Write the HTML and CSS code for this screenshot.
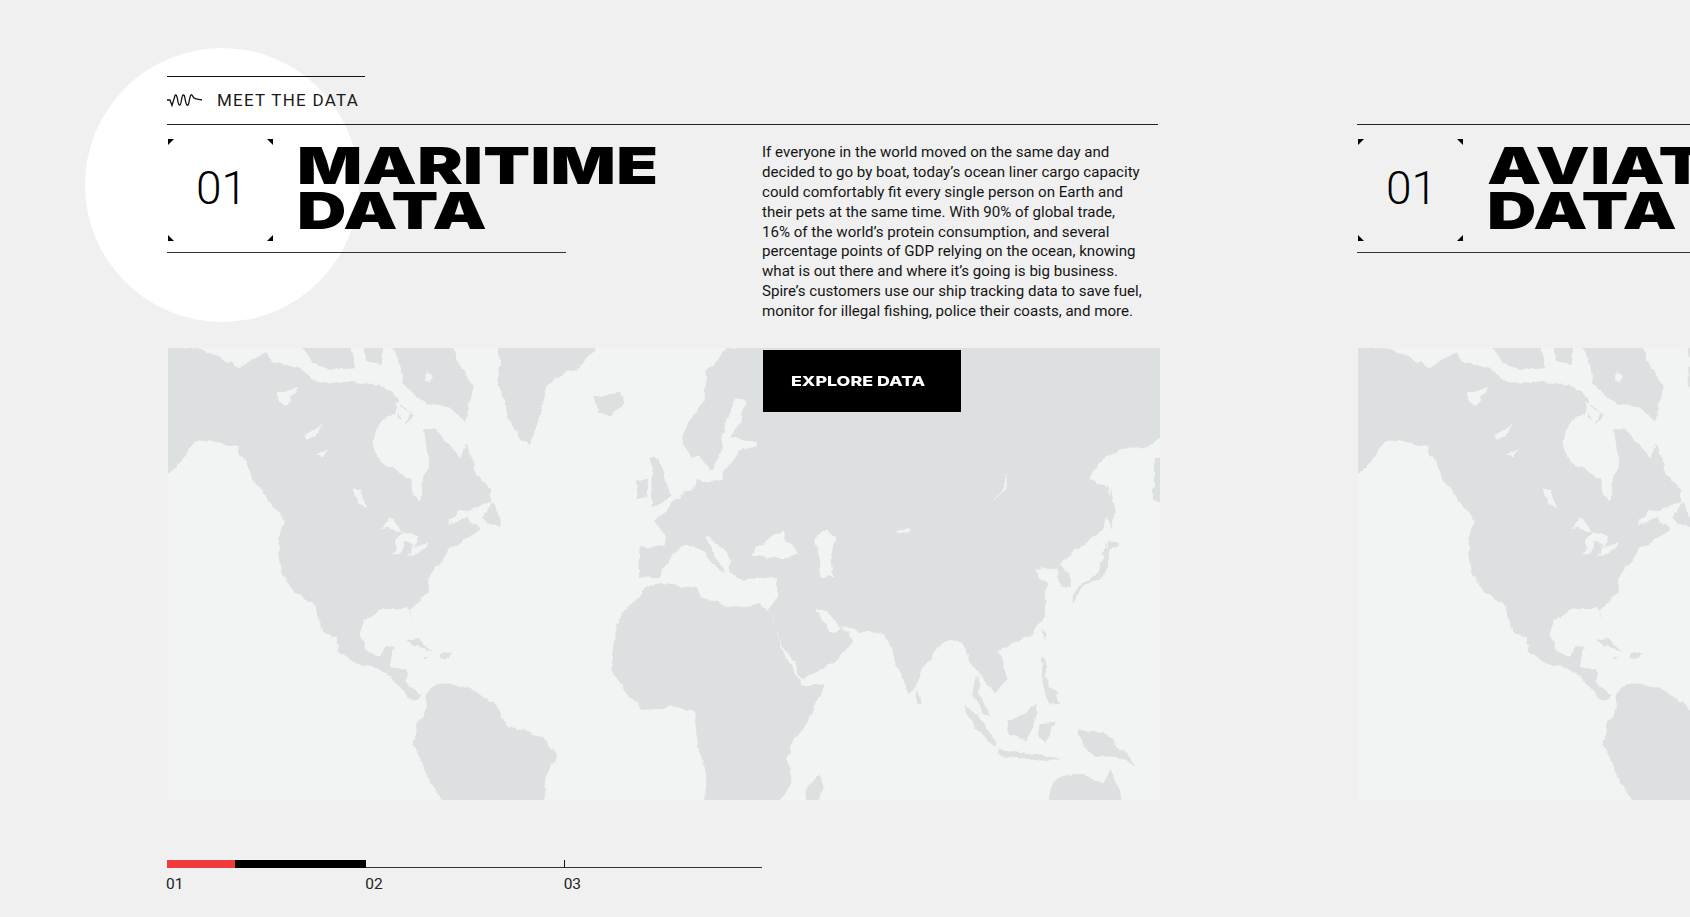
FILE: index.html
```html
<!DOCTYPE html>
<html lang="en">
<head>
<meta charset="utf-8">
<title>Meet the data</title>
<link rel="stylesheet" href="styles.css">
</head>
<body>
<svg class="sprite" aria-hidden="true">
  <defs>
    <filter id="rough" filterUnits="userSpaceOnUse" x="168" y="348" width="992" height="452" color-interpolation-filters="sRGB">
      <feTurbulence type="fractalNoise" baseFrequency="0.09" numOctaves="3" seed="4" result="n"/>
      <feDisplacementMap in="SourceGraphic" in2="n" scale="7" xChannelSelector="R" yChannelSelector="G"/>
      <feGaussianBlur stdDeviation="0.35"/>
    </filter>
  </defs>
  <symbol id="world" viewBox="168 348 992 452">
    <g filter="url(#rough)">
    <rect class="water" x="160" y="340" width="1010" height="470"/>
    <g transform="translate(150 340) scale(.33333)">
      <g class="land">
        <path d="M45,15 L130,28 L200,45 L270,85 L285,70 L350,35 L375,65 L450,85 L480,115 L530,125 L600,125 L650,130 L720,150 L745,175 L740,215 L695,245 L665,300 L680,350 L720,385 L780,415 L790,470 L810,488 L818,420 L835,365 L822,270 L850,262 L900,320 L930,350 L950,310 L975,395 L1025,450 L1020,490 L960,510 L905,535 L890,560 L950,530 L990,570 L930,610 L900,625 L880,655 L850,690 L835,720 L832,760 L790,800 L778,812 L795,860 L800,870 L785,835 L772,805 L720,805 L680,815 L640,840 L635,890 L650,940 L690,950 L705,920 L735,915 L722,985 L770,985 L770,1030 L815,1065 L800,1078 L780,1078 L750,1040 L720,1010 L660,980 L610,965 L565,930 L560,890 L520,880 L480,790 L430,750 L400,700 L385,640 L395,570 L405,545 L380,510 L340,460 L310,420 L290,370 L260,320 L200,305 L170,300 L130,310 L90,370 L45,415 Z"/>
        <path d="M450,15 L520,15 L600,15 L615,85 L540,90 L490,70 Z"/>
        <path d="M645,15 L700,15 L695,75 L645,65 Z"/>
        <path d="M720,15 L910,15 L925,75 L972,140 L960,180 L942,245 L900,200 L830,190 L800,170 L760,130 L750,75 Z"/>
        <path d="M750,190 L790,230 L772,250 L742,230 Z"/>
        <path d="M1000,530 L1025,490 L1050,530 L1055,565 L1010,550 Z"/>
        <path d="M1040,15 L1345,15 L1290,80 L1220,110 L1190,150 L1170,220 L1150,290 L1135,315 L1105,290 L1075,230 L1045,130 L1050,70 Z"/>
        <path d="M1330,175 L1370,165 L1410,150 L1420,190 L1375,230 L1345,215 Z"/>
        <path d="M830,1050 L875,1030 L960,1045 L1040,1095 L1075,1160 L1180,1190 L1222,1240 L1190,1310 L1180,1400 L890,1400 L840,1320 L790,1210 L800,1150 L830,1110 Z"/>
        <path d="M760,900 L800,895 L850,932 L800,918 Z"/>
        <path d="M868,936 L905,940 L890,955 L865,950 Z"/>
        <path d="M820,950 L840,952 L825,958 Z"/>
      </g>
      <g class="water">
        <path d="M380,165 L445,140 L420,185 L400,195 Z"/>
        <path d="M460,290 L520,248 L495,290 L470,298 Z"/>
        <path d="M498,345 L540,325 L520,348 Z"/>
        <path d="M610,445 L630,450 L645,505 L625,495 Z"/>
        <path d="M690,565 L725,532 L760,575 L735,575 L715,560 Z"/>
        <path d="M730,640 L745,590 L770,575 L800,590 L790,620 L835,610 L830,625 L775,650 L790,610 L765,610 L745,640 Z"/>
        <path d="M890,555 L930,510 L965,515 L950,530 L915,530 Z"/>
        <path d="M480,790 L500,810 L525,895 L500,850 Z"/>
        <path d="M500,105 L610,120 L540,130 L490,120 Z"/>
        <path d="M735,180 L780,225 L760,265 L745,215 Z"/>
        <path d="M830,95 L850,105 L840,130 L828,125 Z"/>
      </g>
    </g>
    <g transform="translate(620 340) scale(.35714 .33333)">
      <g class="land">
        <path d="M400,15 L1530,15 L1530,275 L1480,320 L1400,325 L1340,370 L1315,420 L1365,440 L1380,510 L1350,570 L1290,620 L1260,650 L1230,670 L1255,700 L1260,740 L1235,745 L1225,690 L1190,680 L1160,690 L1195,740 L1190,800 L1190,830 L1150,890 L1100,910 L1060,930 L1085,1020 L1050,1060 L1000,990 L980,960 L950,900 L900,910 L850,980 L830,1040 L810,1065 L780,990 L760,920 L730,880 L650,870 L620,850 L650,905 L600,970 L510,1020 L450,900 L415,810 L440,770 L440,715 L370,715 L340,720 L310,695 L300,640 L250,590 L238,590 L270,650 L295,700 L270,680 L210,615 L170,620 L130,670 L105,715 L50,710 L55,620 L125,620 L125,590 L95,540 L130,515 L170,465 L215,435 L225,350 L200,350 L175,310 L180,265 L240,170 L240,100 L285,40 L330,15 Z"/>
        <path d="M-20,930 L0,830 L75,740 L130,730 L215,745 L225,770 L300,800 L390,795 L415,810 L470,960 L510,1040 L575,1030 L540,1120 L480,1220 L470,1250 L480,1330 L440,1400 L235,1400 L240,1300 L210,1180 L215,1120 L170,1100 L60,1110 L0,1030 L-20,980 Z"/>
        <path d="M90,350 L110,360 L130,440 L145,470 L90,500 L85,440 Z"/>
        <path d="M50,420 L75,420 L75,465 L45,480 Z"/>
        <path d="M560,1300 L570,1340 L555,1400 L515,1400 L520,1350 Z"/>
        <path d="M830,1050 L845,1090 L825,1090 Z"/>
        <path d="M1360,610 L1370,640 L1355,710 L1300,740 L1265,790 L1265,760 L1340,700 Z"/>
        <path d="M1370,600 L1395,610 L1365,635 Z"/>
        <path d="M1375,440 L1385,520 L1370,570 L1370,490 Z"/>
        <path d="M1185,870 L1192,880 L1182,905 Z"/>
        <path d="M1495,360 L1530,355 L1530,490 L1495,480 Z"/>
        <path d="M1185,950 L1197,980 L1190,1010 L1220,1060 L1232,1090 L1200,1090 L1180,1020 Z"/>
        <path d="M960,1100 L1000,1120 L1055,1210 L1050,1225 L1000,1170 Z"/>
        <path d="M1055,1230 L1240,1255 L1180,1262 L1060,1245 Z"/>
        <path d="M1165,1090 L1165,1130 L1140,1200 L1090,1190 L1085,1140 L1130,1125 Z"/>
        <path d="M1175,1150 L1220,1145 L1195,1210 L1170,1190 Z"/>
        <path d="M1280,1170 L1360,1180 L1410,1235 L1445,1280 L1390,1250 L1330,1250 L1290,1200 Z"/>
        <path d="M1195,1400 L1210,1330 L1270,1295 L1290,1300 L1350,1330 L1375,1285 L1410,1400 Z"/>
        <path d="M1000,1000 L1005,1060 L1040,1130 L1015,1120 L990,1060 Z"/>
      </g>
      <g class="water">
        <path d="M325,175 L350,180 L340,240 L310,290 L385,305 L385,320 L330,335 L300,380 L285,420 L235,430 L215,410 L220,345 L255,395 L285,330 L290,260 Z"/>
        <path d="M380,625 L430,590 L465,565 L460,590 L495,640 L470,655 L400,650 L370,650 Z"/>
        <path d="M545,590 L580,565 L600,600 L590,650 L600,710 L565,715 L555,650 Z"/>
        <path d="M775,572 L812,568 L815,575 L780,580 Z"/>
        <path d="M1085,400 L1085,440 L1040,485 L1075,440 Z"/>
        <path d="M550,810 L570,810 L620,860 L600,880 L580,870 Z"/>
      </g>
    </g>
    </g>
  </symbol>
</svg>

<div class="circle"></div>

<main class="track">
  <section class="slide">
    <div class="eyebrow">
      <svg class="wave" viewBox="0 0 36 14" aria-hidden="true"><path d="M0 7 H3 L5 12.5 L8 2.5 C9 1 10 3 10.5 6 C11 10 12 13 13 12 C14.5 11 14.5 3 16 2 C17.5 1 18 6 18.5 8 C19 11 20 13 21 12 C22.5 10 22.5 3 24 2 C25 1 26 4 27 5 C28 6 30 6 35 7"/></svg>
      <span>MEET THE DATA</span>
    </div>
    <div class="head">
      <div class="title-block">
        <div class="index">
          <i class="corner tl"></i><i class="corner tr"></i><i class="corner bl"></i><i class="corner br"></i>
          01
        </div>
        <h2 class="title">MARITIME<br>DATA</h2>
      </div>
      <div class="copy">
        <p>If everyone in the world moved on the same day and<br>decided to go by boat, today’s ocean liner cargo capacity<br>could comfortably fit every single person on Earth and<br>their pets at the same time. With 90% of global trade,<br>16% of the world’s protein consumption, and several<br>percentage points of GDP relying on the ocean, knowing<br>what is out there and where it’s going is big business.<br>Spire’s customers use our ship tracking data to save fuel,<br>monitor for illegal fishing, police their coasts, and more.</p>
        <a class="cta" href="#"><span>EXPLORE DATA</span></a>
      </div>
    </div>
    <svg class="map"><use href="#world"/></svg>
  </section>

  <section class="slide">
    <div class="eyebrow eyebrow-empty"></div>
    <div class="head">
      <div class="title-block">
        <div class="index">
          <i class="corner tl"></i><i class="corner tr"></i><i class="corner bl"></i><i class="corner br"></i>
          01
        </div>
        <h2 class="title">AVIATION<br>DATA</h2>
      </div>
    </div>
    <svg class="map"><use href="#world"/></svg>
  </section>
</main>

<nav class="progress">
  <div class="bar">
    <div class="seg seg-red"></div>
    <div class="seg seg-black"></div>
    <div class="tick"></div>
  </div>
  <div class="labels">
    <span>01</span><span>02</span><span>03</span>
  </div>
</nav>
</body>
</html>
```

FILE: styles.css
```css
* { box-sizing: border-box; }

html, body { margin: 0; height: 100%; }

body {
  position: relative;
  width: 1690px;
  height: 917px;
  overflow: hidden;
  background: #f0f0f0;
  color: #000;
  font-family: Roboto, "Liberation Sans", sans-serif;
}

.sprite { position: absolute; width: 0; height: 0; }

.circle {
  position: absolute;
  left: 85px;
  top: 48px;
  width: 274px;
  height: 274px;
  border-radius: 50%;
  background: #fff;
}

.track {
  position: relative;
  display: flex;
  gap: 197px;
  padding: 76px 0 0 167px;
  width: 1690px;
  height: 860px;
  overflow: hidden;
}

.slide {
  flex: 0 0 992px;
  display: flex;
  flex-direction: column;
}

.eyebrow {
  display: flex;
  align-items: center;
  width: 198px;
  height: 48px;
  padding-bottom: 1px;
  border-top: 1px solid #111;
  font-size: 17px;
  letter-spacing: 1.25px;
  white-space: nowrap;
  color: #1a1a1a;
}

.eyebrow-empty { border-top: 0; }

.wave {
  flex: none;
  width: 36px;
  height: 14px;
  margin-right: 14px;
  fill: none;
  stroke: #111;
  stroke-width: 1.3;
}

.head {
  position: relative;
  z-index: 1;
  display: flex;
  width: 991px;
  height: 224px;
  border-top: 1px solid #222;
}

.title-block {
  flex: 0 0 399px;
  min-width: 0;
  display: flex;
  align-items: flex-start;
  height: 128px;
  padding: 14px 0 0 1px;
  border-bottom: 1px solid #333;
}

.index {
  position: relative;
  flex: 0 0 105px;
  height: 102px;
  display: flex;
  align-items: center;
  justify-content: center;
  padding: 0 0 4px 2px;
  font-size: 46px;
  font-weight: 300;
  line-height: 1;
  color: #000;
}

.corner {
  position: absolute;
  width: 6px;
  height: 6px;
  background: #000;
}
.tl { left: 0; top: 0; clip-path: polygon(0 0, 100% 0, 0 100%); }
.tr { right: 0; top: 0; clip-path: polygon(0 0, 100% 0, 100% 100%); }
.bl { left: 0; bottom: 0; clip-path: polygon(0 0, 100% 100%, 0 100%); }
.br { right: 0; bottom: 0; clip-path: polygon(100% 0, 100% 100%, 0 100%); }

.title {
  margin: 0 0 0 24px;
  padding-top: 4px;
  font-family: Inter, "Liberation Sans", sans-serif;
  font-size: 51px;
  font-weight: 900;
  line-height: 45px;
  letter-spacing: 0.2px;
  white-space: nowrap;
  transform: scaleX(1.34);
  transform-origin: left top;
}

.copy {
  margin-left: 196px;
  padding-top: 18px;
  font-size: 15.1px;
  line-height: 19.87px;
  color: #151515;
}

.copy p { margin: 0; white-space: nowrap; }

.cta {
  display: flex;
  align-items: center;
  width: 198px;
  height: 62px;
  margin: 28px 0 0 1px;
  padding: 2px 0 0 28px;
  background: #000;
  color: #fff;
  text-decoration: none;
  font-family: Inter, "Liberation Sans", sans-serif;
  font-size: 13.5px;
  font-weight: 800;
  white-space: nowrap;
}

.cta span {
  display: inline-block;
  transform: scaleX(1.32);
  transform-origin: left center;
}

.map {
  display: block;
  width: 992px;
  height: 452px;
  margin-left: 1px;
}

.land { fill: #dde0e0; }
.water { fill: #f2f3f3; }

.progress {
  position: relative;
  width: 595px;
  margin-left: 167px;
}

.bar {
  display: flex;
  align-items: flex-start;
  height: 8px;
  border-bottom: 1px solid #333;
}

.seg { height: 8px; }
.seg-red { width: 68px; background: #ef3b3b; }
.seg-black { width: 131px; background: #000; }
.tick { width: 1px; height: 8px; margin-left: 198px; background: #111; }

.labels {
  display: flex;
  padding-top: 7px;
  font-size: 15.5px;
  line-height: 18px;
  color: #222;
}

.labels span { width: 199px; }
.labels span:first-child { margin-left: -1px; width: 200px; }
```
